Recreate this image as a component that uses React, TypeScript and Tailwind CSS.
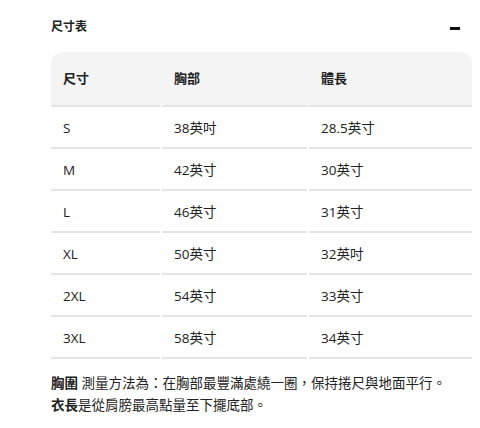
import React from "react";

const ROWS = [
  ["S", "38英吋", "28.5英寸"],
  ["M", "42英寸", "30英寸"],
  ["L", "46英寸", "31英寸"],
  ["XL", "50英寸", "32英吋"],
  ["2XL", "54英寸", "33英寸"],
  ["3XL", "58英寸", "34英寸"],
];

const FONT = {
  fontFamily: '"Open Sans", "Noto Sans CJK TC", sans-serif',
};

export default function App() {
  return (
    <div className="w-[480px] h-[428px] bg-white text-[#222] pl-[51px] pr-[8px]" style={FONT}>
      {/* Accordion header */}
      <div className="flex justify-between items-start pt-[19px] pr-[12px] h-[52px]">
        <span className="text-[12px] font-semibold leading-[16px]">尺寸表</span>
        <div className="w-[10px] h-[2.5px] bg-[#111] mt-[8px]" />
      </div>

      {/* Size table */}
      <div className="w-[421px]">
        <div className="grid grid-cols-[109px_145px_1fr] gap-x-[2px] bg-[#f4f4f4] rounded-t-[12px]">
          {["尺寸", "胸部", "體長"].map((h) => (
            <div
              key={h}
              className="h-[55px] pl-[12px] flex items-center text-[13px] font-semibold border-b-2 border-[#e4e4e4]"
            >
              {h}
            </div>
          ))}
        </div>
        {ROWS.map((row) => (
          <div key={row[0]} className="grid grid-cols-[109px_145px_1fr] gap-x-[2px]">
            {row.map((cell, i) => (
              <div
                key={i}
                className="h-[42px] pl-[12px] pt-[2px] flex items-center text-[13.5px] border-b-2 border-[#e4e4e4]"
              >
                {cell}
              </div>
            ))}
          </div>
        ))}
      </div>

      {/* Notes */}
      <div className="mt-[13px] text-[13.5px] leading-[22px]">
        <p>
          <span className="font-bold">胸圍</span> 測量方法為：在胸部最豐滿處繞一圈，保持捲尺與地面平行。
        </p>
        <p>
          <span className="font-bold">衣長</span>是從肩膀最高點量至下擺底部。
        </p>
      </div>
    </div>
  );
}
